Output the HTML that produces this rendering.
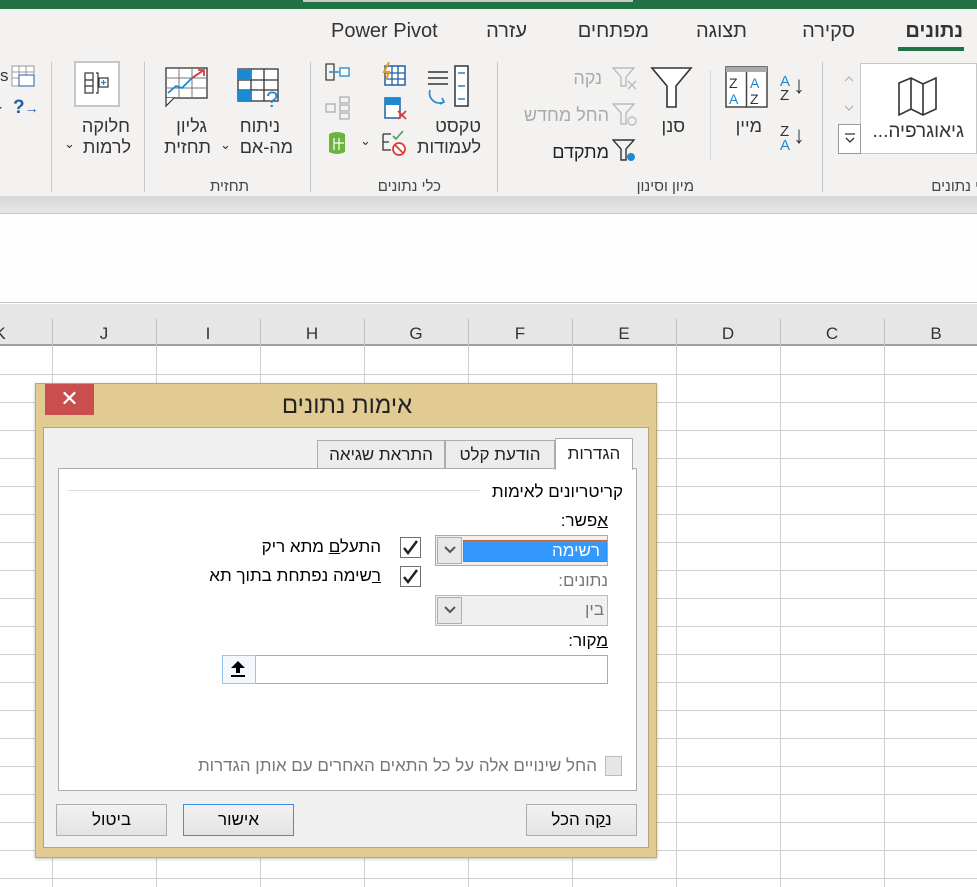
<!DOCTYPE html>
<html><head><meta charset="utf-8">
<style>
*{margin:0;padding:0;box-sizing:border-box}
body{width:977px;height:887px;overflow:hidden;background:#fff;font-family:"Liberation Sans","Noto Sans CJK SC",sans-serif;position:relative;color:#222}
.a{position:absolute}
.t{position:absolute;white-space:nowrap;direction:rtl}
.vl{position:absolute;width:1px;background:#c8c8c8}
.col{position:absolute;top:319px;height:27px;width:104px;text-align:center;font-size:17px;color:#333;line-height:30px}
.btn{position:absolute;height:32px;border:1px solid #adadad;background:linear-gradient(#f2f2f2,#e3e3e3);text-align:center;font-size:17px;line-height:30px;color:#000}
.cb{position:absolute;width:21px;height:21px;border:1px solid #707070;background:#fff;text-align:center;font-size:17px;line-height:19px;color:#222}
.d{font-size:17px}
</style></head><body>
<div class="a" style="left:0;top:0;width:977px;height:9px;background:#217346"></div>
<div class="a" style="left:303px;top:0;width:330px;height:2px;background:#c9c9c9"></div>
<div class="a" style="left:0;top:9px;width:977px;height:187px;background:#f3f2f1"></div>
<div class="t" style="right:14px;top:20px;font-size:20px;font-weight:bold;color:#333">נתונים</div>
<div class="a" style="left:898px;top:47px;width:66px;height:4px;background:#217346"></div>
<div class="t" style="right:122px;top:20px;font-size:20px;color:#333">סקירה</div>
<div class="t" style="right:230px;top:20px;font-size:20px;color:#333">תצוגה</div>
<div class="t" style="right:328px;top:20px;font-size:20px;color:#333">מפתחים</div>
<div class="t" style="right:450px;top:20px;font-size:20px;color:#333">עזרה</div>
<div class="a" style="left:331px;top:20px;font-size:20px;color:#333">Power Pivot</div>
<div class="vl" style="left:822px;top:62px;height:130px"></div>
<div class="vl" style="left:497px;top:62px;height:130px"></div>
<div class="vl" style="left:310px;top:62px;height:130px"></div>
<div class="vl" style="left:144px;top:62px;height:130px"></div>
<div class="vl" style="left:51px;top:62px;height:130px"></div>
<div class="vl" style="left:710px;top:70px;height:90px;background:#d8d8d8"></div>
<div class="a" style="left:838px;top:63px;width:139px;height:91px;border:1px solid #c6c6c6;background:#fff"></div>
<div class="a" style="left:838px;top:63px;width:23px;height:91px;border-right:1px solid #c6c6c6;background:#f3f2f1"></div>
<div class="a" style="left:838px;top:124px;width:23px;height:30px;border:1px solid #9a9a9a;background:#fff"></div>
<svg class="a" style="left:843px;top:132px" width="14" height="14"><path d="M2 2 H12 M3 6 L7 10 L11 6" fill="none" stroke="#333" stroke-width="1.3"/></svg>
<svg class="a" style="left:843px;top:74px" width="12" height="10"><path d="M2 7 L6 3 L10 7" fill="none" stroke="#aaa"/></svg>
<svg class="a" style="left:843px;top:103px" width="12" height="10"><path d="M2 3 L6 7 L10 3" fill="none" stroke="#aaa"/></svg>
<svg class="a" style="left:896px;top:77px" width="46" height="40"><path d="M3 6 L15 1 L27 7 L40 1 V32 L27 38 L15 32 L3 38 Z M15 1 V32 M27 7 V38" fill="none" stroke="#333" stroke-width="1.6"/></svg>
<div class="t" style="right:13px;top:121px;font-size:19px;color:#333">גיאוגרפיה...</div>
<div class="t" style="right:-2px;top:178px;font-size:15px;color:#444">י נתונים</div>
<div class="a" style="left:780px;top:75px;font-size:15px;line-height:14px;color:#1e88d0">A<br><span style="color:#333">Z</span></div><div class="a" style="left:793px;top:72px;font-size:24px;color:#333">↓</div>
<div class="a" style="left:780px;top:125px;font-size:15px;line-height:14px;color:#333">Z<br><span style="color:#1e88d0">A</span></div><div class="a" style="left:793px;top:122px;font-size:24px;color:#333">↓</div>
<svg class="a" style="left:725px;top:66px" width="44" height="43"><rect x="1" y="1" width="41" height="40" fill="#fff" stroke="#444" stroke-width="1.5"/><rect x="1" y="1" width="41" height="5" fill="#aaa"/><line x1="21.5" y1="6" x2="21.5" y2="41" stroke="#444" stroke-width="1.5"/><text x="4" y="22" font-size="14" fill="#333" font-family="Liberation Sans">Z</text><text x="4" y="38" font-size="14" fill="#1e88d0" font-family="Liberation Sans">A</text><text x="25" y="22" font-size="14" fill="#1e88d0" font-family="Liberation Sans">A</text><text x="25" y="38" font-size="14" fill="#333" font-family="Liberation Sans">Z</text></svg>
<div class="t" style="right:215px;top:116px;font-size:18px;color:#333">מיין</div>
<svg class="a" style="left:650px;top:66px" width="44" height="44"><path d="M2 2 H41 L26 20 V41 H17 V20 Z" fill="#fff" stroke="#333" stroke-width="1.6"/></svg>
<div class="t" style="right:292px;top:116px;font-size:18px;color:#333">סנן</div>
<svg class="a" style="left:612px;top:66px" width="26" height="24"><path d="M1 2 H22 L14 11 V20 H9 V11 Z" fill="none" stroke="#bbb" stroke-width="1.4"/><path d="M16 15 L24 23 M24 15 L16 23" stroke="#bbb" stroke-width="1.4"/></svg>
<div class="t" style="right:375px;top:68px;font-size:18px;color:#aaa">נקה</div>
<svg class="a" style="left:612px;top:102px" width="26" height="26"><path d="M1 2 H22 L14 11 V22 H9 V11 Z" fill="none" stroke="#bbb" stroke-width="1.4"/><circle cx="20" cy="19" r="4" fill="none" stroke="#bbb" stroke-width="1.4"/></svg>
<div class="t" style="right:368px;top:105px;font-size:18px;color:#aaa">החל מחדש</div>
<svg class="a" style="left:612px;top:138px" width="26" height="26"><path d="M1 2 H22 L14 11 V22 H9 V11 Z" fill="none" stroke="#333" stroke-width="1.4"/><circle cx="19" cy="19" r="4" fill="#1e88d0"/></svg>
<div class="t" style="right:368px;top:142px;font-size:18px;color:#222">מתקדם</div>
<div class="t" style="right:283px;top:178px;font-size:15px;color:#444">מיון וסינון</div>
<svg class="a" style="left:420px;top:64px" width="50" height="46"><path d="M8 8 H28 M8 14 H28 M8 20 H28" stroke="#333" stroke-width="1.5"/><rect x="35" y="2" width="13" height="40" fill="#fff" stroke="#333" stroke-width="1.5"/><path d="M38 9 H45 M38 22 H45 M38 35 H45" stroke="#1e88d0" stroke-width="1.5"/><path d="M10 26 A10 10 0 0 0 24 38 L22 34 M24 38 L20 40" fill="none" stroke="#1e88d0" stroke-width="1.6"/></svg>
<div class="t" style="right:496px;top:116px;font-size:18px;color:#333">טקסט</div>
<div class="t" style="right:496px;top:137px;font-size:18px;color:#333">לעמודות</div>
<svg class="a" style="left:381px;top:62px" width="26" height="25"><rect x="4" y="4" width="20" height="19" fill="#fff" stroke="#1e5fa8" stroke-width="1.5"/><path d="M4 11 H24 M4 17 H24 M11 4 V23 M17 4 V23" stroke="#1e5fa8" stroke-width="1.3"/><path d="M8 0 L3 10 H8 L5 18" fill="none" stroke="#e89a1a" stroke-width="2"/></svg>
<svg class="a" style="left:384px;top:97px" width="24" height="26"><rect x="1" y="1" width="15" height="20" fill="#fff" stroke="#1e5fa8" stroke-width="1.5"/><rect x="1" y="1" width="15" height="7" fill="#1e88d0"/><path d="M14 14 L22 22 M22 14 L14 22" stroke="#e03c3c" stroke-width="1.8"/></svg>
<svg class="a" style="left:381px;top:130px" width="28" height="26"><path d="M2 4 H10 M2 4 V20 H10 M2 12 H8" fill="none" stroke="#333" stroke-width="1.3"/><path d="M12 6 L15 9 L22 1" fill="none" stroke="#3aa655" stroke-width="1.6"/><circle cx="18" cy="19" r="6" fill="#fff" stroke="#e03c3c" stroke-width="1.8"/><path d="M14 15 L22 23" stroke="#e03c3c" stroke-width="1.8"/></svg>
<div class="a" style="left:360px;top:133px;font-size:13px;color:#333">⌄</div>
<svg class="a" style="left:325px;top:62px" width="26" height="22"><rect x="1" y="2" width="8" height="16" fill="none" stroke="#333" stroke-width="1.2"/><path d="M4 10 H14" stroke="#1e88d0" stroke-width="1.5"/><rect x="15" y="6" width="9" height="8" fill="#fff" stroke="#1e88d0" stroke-width="1.3"/></svg>
<svg class="a" style="left:325px;top:96px" width="26" height="24"><g fill="none" stroke="#aaa" stroke-width="1.2"><rect x="1" y="8" width="9" height="8"/><rect x="15" y="1" width="9" height="6"/><rect x="15" y="9" width="9" height="6"/><rect x="15" y="17" width="9" height="6"/></g></svg>
<svg class="a" style="left:325px;top:130px" width="24" height="26"><path d="M4 4 Q12 0 20 4 V22 Q12 26 4 22 Z" fill="#6cb33f"/><path d="M9 8 V20 M14 8 V20 M9 13 H19" stroke="#fff" stroke-width="1.2"/></svg>
<div class="t" style="right:536px;top:178px;font-size:15px;color:#444">כלי נתונים</div>
<svg class="a" style="left:236px;top:66px" width="48" height="44"><rect x="2" y="3" width="40" height="32" fill="#fff" stroke="#333" stroke-width="1.3"/><path d="M2 14 H42 M2 24 H42 M15 3 V35 M28 3 V35" stroke="#333" stroke-width="1.3"/><rect x="2" y="3" width="13" height="11" fill="#1e88d0"/><rect x="2" y="24" width="13" height="11" fill="#1e88d0"/><text x="30" y="41" font-size="22" fill="#1e88d0" font-family="Liberation Sans">?</text></svg>
<div class="t" style="right:697px;top:116px;font-size:18px;color:#333">ניתוח</div>
<div class="t" style="right:684px;top:137px;font-size:18px;color:#333">מה-אם</div>
<div class="a" style="left:220px;top:137px;font-size:13px;color:#333">⌄</div>
<svg class="a" style="left:164px;top:66px" width="46" height="42"><rect x="2" y="2" width="41" height="30" fill="#fff" stroke="#333" stroke-width="1.3"/><path d="M2 12 H43 M2 22 H43 M15 2 V32 M28 2 V32" stroke="#777" stroke-width="1"/><path d="M4 27 L12 20 L18 22 L28 12 L40 4" fill="none" stroke="#1e88d0" stroke-width="1.8"/><path d="M28 12 L40 4 M34 4 H40 V10" fill="none" stroke="#e03c3c" stroke-width="1.8"/><path d="M2 32 V40 L10 32" fill="#fff" stroke="#333" stroke-width="1.2"/></svg>
<div class="t" style="right:770px;top:116px;font-size:18px;color:#333">גליון</div>
<div class="t" style="right:766px;top:137px;font-size:18px;color:#333">תחזית</div>
<div class="t" style="right:728px;top:178px;font-size:15px;color:#444">תחזית</div>
<div class="a" style="left:74px;top:61px;width:46px;height:46px;border:2px solid #c6c6c6;background:#fff"></div>
<svg class="a" style="left:84px;top:71px" width="26" height="26"><rect x="1" y="2" width="8" height="20" fill="none" stroke="#333" stroke-width="1.2"/><path d="M1 9 H9 M1 15 H9 M12 2 H14 V22 H12" fill="none" stroke="#333" stroke-width="1.2"/><rect x="15" y="7" width="9" height="9" fill="#fff" stroke="#333" stroke-width="1.2"/><path d="M19.5 9 V14 M17 11.5 H22" stroke="#1e88d0" stroke-width="1.3"/></svg>
<div class="t" style="right:847px;top:116px;font-size:18px;color:#333">חלוקה</div>
<div class="t" style="right:846px;top:137px;font-size:18px;color:#333">לרמות</div>
<div class="a" style="left:64px;top:136px;font-size:13px;color:#333">⌄</div>
<div class="a" style="left:0;top:66px;font-size:17px;color:#333">s</div>
<svg class="a" style="left:11px;top:64px" width="24" height="24"><rect x="1" y="2" width="22" height="20" fill="#fff" stroke="#999" stroke-width="1"/><path d="M1 8 H23 M1 14 H23 M8 2 V22 M15 2 V22" stroke="#999"/><rect x="8" y="11" width="15" height="11" fill="#fff" stroke="#1e5fa8"/></svg>
<div class="a" style="left:-4px;top:101px;font-size:17px;color:#333">r</div>
<div class="a" style="left:13px;top:97px;font-size:19px;color:#1e5fa8;font-weight:bold">?<span style="font-size:14px">→</span></div>
<div class="a" style="left:0;top:196px;width:977px;height:18px;background:linear-gradient(#d8d8d8,#e6e6e6);border-bottom:1px solid #c6c6c6"></div>
<div class="a" style="left:0;top:214px;width:977px;height:89px;background:#fdfdfd;border-bottom:1px solid #c6c6c6"></div>
<div class="a" style="left:0;top:304px;width:977px;height:42px;background:#e6e6e6;border-bottom:2px solid #a0a0a0"></div>
<div class="col" style="left:-52px">K</div>
<div class="col" style="left:52px">J</div><div class="col" style="left:156px">I</div><div class="col" style="left:260px">H</div><div class="col" style="left:364px">G</div><div class="col" style="left:468px">F</div><div class="col" style="left:572px">E</div><div class="col" style="left:676px">D</div><div class="col" style="left:780px">C</div><div class="col" style="left:884px">B</div>
<svg class="a" style="left:0;top:319px" width="977" height="568"><g stroke="#d0d0d0" stroke-width="1">
<path d="M52.5 0V568M156.5 0V568M260.5 0V568M364.5 0V568M468.5 0V568M572.5 0V568M676.5 0V568M780.5 0V568M884.5 0V568"/>
<path d="M0 55.5H977M0 83.5H977M0 111.5H977M0 139.5H977M0 167.5H977M0 195.5H977M0 223.5H977M0 251.5H977M0 279.5H977M0 307.5H977M0 335.5H977M0 363.5H977M0 391.5H977M0 419.5H977M0 447.5H977M0 475.5H977M0 503.5H977M0 531.5H977M0 559.5H977"/></g>
<path d="M52.5 0V27M156.5 0V27M260.5 0V27M364.5 0V27M468.5 0V27M572.5 0V27M676.5 0V27M780.5 0V27M884.5 0V27" stroke="#c0c0c0"/></svg>
<div class="a" style="left:35px;top:383px;width:622px;height:475px;background:#e1cb93;border:1px solid #bfa870;box-shadow:0 1px 3px rgba(0,0,0,.25)"></div>
<div class="a" style="left:45px;top:384px;width:49px;height:31px;background:#c94f4f;color:#fff;text-align:center;font-size:22px;line-height:29px">✕</div>
<div class="t" style="left:0;width:694px;text-align:center;direction:rtl;top:392px;font-size:24px;color:#222">אימות נתונים</div>
<div class="a" style="left:43px;top:427px;width:606px;height:421px;background:#f0f0f0;border:1px solid #b5a57a"></div>
<div class="a d" style="left:317px;top:440px;width:128px;height:29px;background:#ececec;border:1px solid #acacac;text-align:center;line-height:28px;direction:rtl">התראת שגיאה</div>
<div class="a d" style="left:445px;top:440px;width:110px;height:29px;background:#ececec;border:1px solid #acacac;text-align:center;line-height:28px;direction:rtl">הודעת קלט</div>
<div class="a" style="left:58px;top:468px;width:579px;height:323px;background:#fff;border:1px solid #acacac"></div>
<div class="a d" style="left:555px;top:438px;width:78px;height:32px;background:#fff;border:1px solid #acacac;border-bottom:none;text-align:center;line-height:30px;direction:rtl">הגדרות</div>
<div class="t d" style="right:354px;top:482px;color:#000">קריטריונים לאימות</div>
<div class="a" style="left:68px;top:490px;width:412px;height:1px;background:#dcdcdc"></div>
<div class="t d" style="right:369px;top:511px;color:#000"><u>א</u>פשר:</div>
<div class="a" style="left:435px;top:535px;width:173px;height:31px;border:1px solid #aaa;background:#f0f0f0"></div>
<div class="a" style="left:437px;top:537px;width:25px;height:27px;border:1px solid #adadad;background:#e8e8e8"></div>
<svg class="a" style="left:443px;top:545px" width="14" height="10"><path d="M2 2 L7 7 L12 2" fill="none" stroke="#555" stroke-width="2"/></svg>
<div class="a d" style="left:463px;top:540px;width:144px;height:22px;background:#3399ff;border:1px dotted #c06020;color:#fff;text-align:right;padding-right:6px;line-height:20px;direction:rtl">רשימה</div>
<div class="t d" style="right:369px;top:571px;color:#777">נתונים:</div>
<div class="a" style="left:435px;top:595px;width:173px;height:31px;border:1px solid #bbb;background:#f0f0f0"></div>
<div class="a" style="left:437px;top:597px;width:25px;height:27px;border:1px solid #adadad;background:#e8e8e8"></div>
<svg class="a" style="left:443px;top:605px" width="14" height="10"><path d="M2 2 L7 7 L12 2" fill="none" stroke="#555" stroke-width="2"/></svg>
<div class="t d" style="right:373px;top:600px;color:#777">בין</div>
<div class="t d" style="right:369px;top:631px;color:#000"><u>מ</u>קור:</div>
<div class="a" style="left:222px;top:655px;width:386px;height:29px;border:1px solid #aaa;background:#fff"></div>
<div class="a" style="left:222px;top:655px;width:34px;height:29px;border:1px solid #99c4f0;background:#f4f8fc"></div>
<svg class="a" style="left:228px;top:660px" width="20" height="18"><path d="M10 1 L3 8 H8 V13 H12 V8 H17 Z" fill="#000"/><path d="M3 16 H17" stroke="#000" stroke-width="2"/></svg>
<svg class="a" style="left:400px;top:537px" width="21" height="21"><rect x=".5" y=".5" width="20" height="20" fill="#fff" stroke="#707070"/><path d="M4 11 L8 16 L17 4" fill="none" stroke="#222" stroke-width="2.5"/></svg>
<div class="t d" style="right:596px;top:537px;color:#000">התעל<u>ם</u> מתא ריק</div>
<svg class="a" style="left:400px;top:566px" width="21" height="21"><rect x=".5" y=".5" width="20" height="20" fill="#fff" stroke="#707070"/><path d="M4 11 L8 16 L17 4" fill="none" stroke="#222" stroke-width="2.5"/></svg>
<div class="t d" style="right:596px;top:566px;color:#000"><u>ר</u>שימה נפתחת בתוך תא</div>
<div class="a" style="left:605px;top:756px;width:17px;height:20px;border:1px solid #bcbcbc;background:#e6e6e6"></div>
<div class="t d" style="right:380px;top:756px;color:#777">החל שינויים אלה על כל התאים האחרים עם אותן הגדרות</div>
<div class="btn" style="left:526px;top:804px;width:111px;direction:rtl">נ<u>ק</u>ה הכל</div>
<div class="btn" style="left:183px;top:804px;width:111px;border-color:#3c8ee8">אישור</div>
<div class="btn" style="left:56px;top:804px;width:111px">ביטול</div>
</body></html>
